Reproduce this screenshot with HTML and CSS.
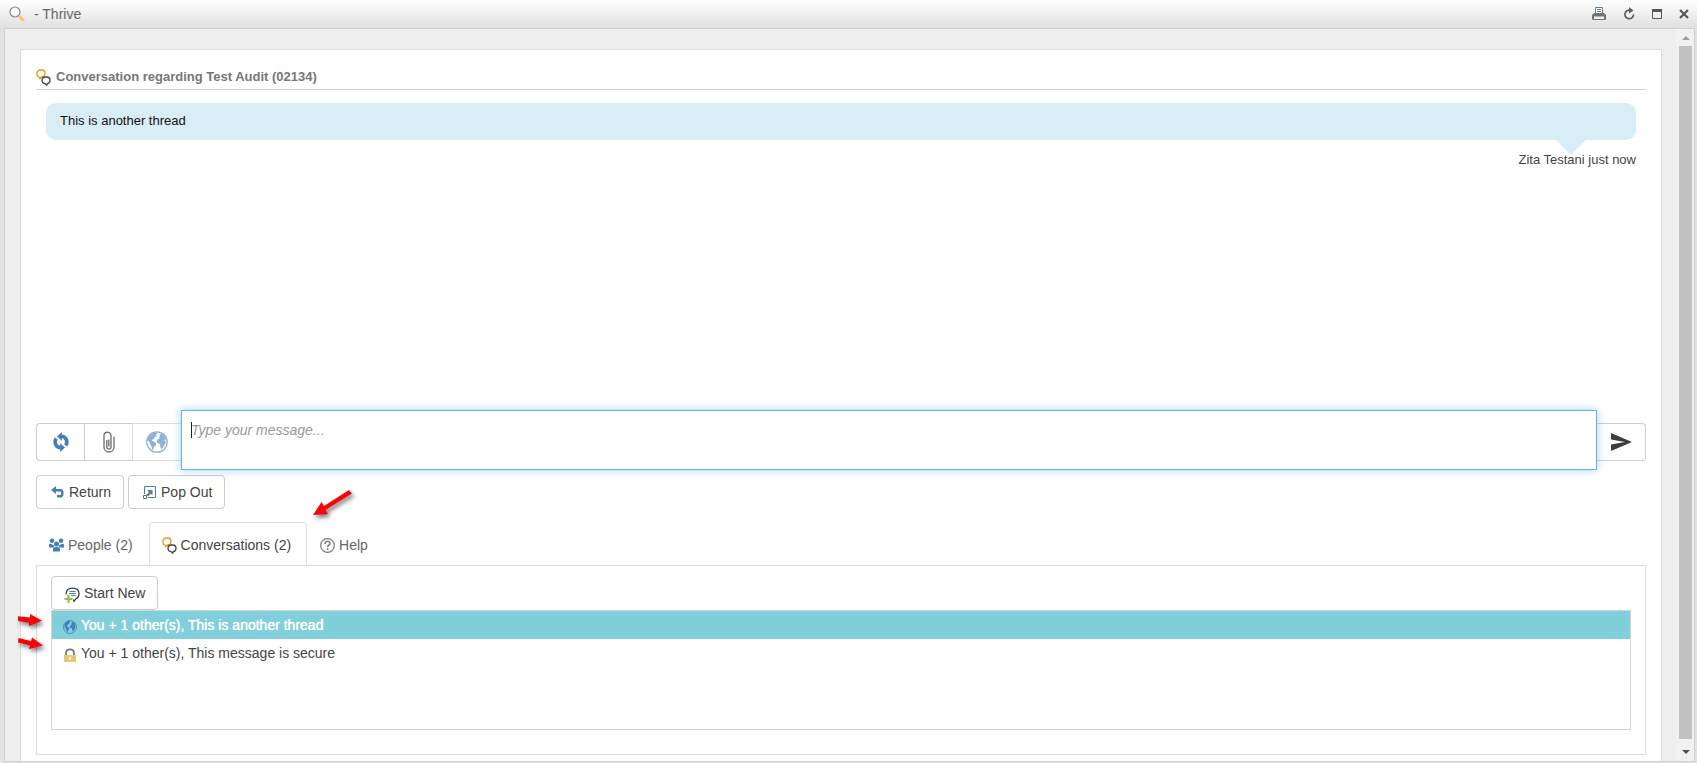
FILE: index.html
```html
<!DOCTYPE html>
<html lang="en">
<head>
<meta charset="utf-8">
<title>Thrive</title>
<link rel="stylesheet" href="styles.css">
</head>
<body>
<svg class="defs" aria-hidden="true">
  <symbol id="chats" viewBox="0 0 15 17">
    <path d="M4 8.300C2 8.300 1 6.800 1 5.200V4C1 2 2.500 1 4.500 1h1.200C7.700 1 9 2.200 9 4.200c0 2-1.300 3.600-3.300 3.800L4 9.500z" fill="none" stroke="#e39a17" stroke-width="1.300"/>
    <path d="M9.500 8h1.200c2 0 3.300 1.200 3.300 3.200 0 1.900-1.200 3.200-2.800 3.500l-.4 1.400-1.800-1.400C7 14.400 6 13.100 6 11.300 6 9.200 7.500 8 9.500 8z" fill="none" stroke="#444" stroke-width="1.300"/>
  </symbol>
  <symbol id="globe" viewBox="0 0 22 22">
    <circle cx="11" cy="11" r="10.200" fill="none" stroke="currentColor" stroke-width="1.300"/>
    <path d="M3 5.500C5 3 7.500 1.500 10.500 1.200l1 1.600-1.500 1 .5 1.200-2 1.200-.6 1.800-1.900.7.300 1.400 2 .6 2 1.700-.8 2.300-1.700 1.400-.5 2.700-1.200-.4-.8-3.400-1.500-2-.3-2.200L1.500 9z" fill="currentColor"/>
    <path d="M13.300 3.700 16 2.600l3 3.100 1.300 3-1.300-.3-.9.800 1.700 1-.5 2.600-1.900 2.500-1 2.200-1.500.3-.6-2.600-.2-2.300-2.600-.6-.9-2 1.200-2 1.800-.8-.5-1.300.8-.9z" fill="currentColor"/>
  </symbol>
</svg>

<header class="titlebar">
  <svg class="mag" viewBox="0 0 16 16"><circle cx="6" cy="6" r="5" fill="#f6f6f6" stroke="#8a8a8a" stroke-width="1.200"/><path d="M10 10 14.800 14.800" stroke="#f3c66b" stroke-width="3"/></svg>
  <h1>- Thrive</h1>
  <div class="window-tools">
    <button aria-label="Print"><svg width="14" height="14" viewBox="0 0 14 14"><path d="M3.500 6V.5h7V6" fill="#fff" stroke="#777"/><path d="M5 2.500h4M5 4.500h4" stroke="#4a80b8"/><path d="M2 6h10l2 2v4l-1 1H1l-1-1V8z" fill="#727272"/><path d="M2 9.500h10V12H2z" fill="#eee"/></svg></button>
    <button aria-label="Refresh"><svg width="12" height="14" viewBox="0 0 12 14"><path d="M7 3.200A4.300 4.300 0 1 0 10.500 7.500" fill="none" stroke="#5e5e5e" stroke-width="1.700"/><path d="M6 0v6.500L10.500 3.500z" fill="#5e5e5e"/></svg></button>
    <button aria-label="Maximize"><svg width="10" height="14" viewBox="0 0 10 14"><path d="M.5 3h9v8.500h-9z" fill="none" stroke="#555"/><path d="M0 2h10v3H0z" fill="#555"/></svg></button>
    <button aria-label="Close"><svg width="10" height="14" viewBox="0 0 10 14"><path d="m1 3 8 8M9 3l-8 8" stroke="#555" stroke-width="2.200"/></svg></button>
  </div>
</header>

<div class="frame">
  <main class="panel">
    <h2 class="heading"><svg class="chat-icon"><use href="#chats"/></svg>Conversation regarding Test Audit (02134)</h2>
    <section class="messages">
      <p class="bubble">This is another thread</p>
      <p class="author">Zita Testani just now</p>
    </section>

    <form class="composer">
      <button type="button" class="tool" aria-label="Refresh messages"><svg width="18" height="20" viewBox="0 0 18 20"><path d="M9 4.300c5 0 7.300 5 4.800 9.200M9 15.700c-5 0-7.300-5-4.800-9.200" fill="none" stroke="#447fba" stroke-width="3.600"/><path d="M9.800 0v8.800L5 4.400zM8.200 20v-8.800l4.800 4.400z" fill="#447fba"/></svg></button>
      <button type="button" class="tool" aria-label="Attach file"><svg width="12" height="22" viewBox="0 0 12 22"><path d="M3.800 9v7c0 2.800 4.200 2.800 4.200 0V4.500C8 .2 1 .2 1 4.500V16c0 6.700 10 6.700 10 0V5.500M5.800 15.500v-7" fill="none" stroke="#777" stroke-width="1.400"/></svg></button>
      <button type="button" class="tool public" aria-label="Public"><svg width="22" height="22"><use href="#globe"/></svg></button>
      <div class="entry"><textarea aria-label="Message" placeholder="Type your message..."></textarea><span class="caret"></span></div>
      <button type="submit" class="tool send" aria-label="Send"><svg width="21" height="18" viewBox="0 0 21 18"><path d="M0 0 21 9 0 18v-6.500L14 9 0 6.500z" fill="#3d3d3d"/></svg></button>
    </form>

    <div class="actions">
      <button class="btn"><svg width="13" height="12" viewBox="0 0 13 12"><path d="M5 0v8L0 4z" fill="#447fba"/><path d="M3 4.200h6.500c2.500 0 2.500 6 0 6H6" fill="none" stroke="#447fba" stroke-width="2.400"/></svg>Return</button>
      <button class="btn"><svg width="13" height="13" viewBox="0 0 13 13"><path d="M1.500 8V.5h11v11H5" fill="none" stroke="#447fba"/><path d="M4 4h5.500v5.500L7.800 7.800 5 10.600 3.200 8.800 6 6z" fill="#777"/><path d="M.5 9.500h3v3h-3z" fill="#fff" stroke="#666"/></svg>Pop Out</button>
    </div>

    <nav class="tabs">
      <a class="tab" href="#people"><svg width="15" height="14" viewBox="0 0 15 14"><g fill="#447fba"><circle cx="3" cy="2.800" r="2.300"/><circle cx="12" cy="2.800" r="2.300"/><circle cx="7.500" cy="6" r="2.500"/><path d="M0 9.500V6.500l1.500-1 3.500 2v2zM15 9.500V6.500l-1.500-1-3.500 2v2zM4 13.500v-3L6 9h3l2 1.500v3z"/></g></svg>People (2)</a>
      <a class="tab active" href="#conversations"><svg class="chat-icon"><use href="#chats"/></svg>Conversations (2)</a>
      <a class="tab" href="#help"><svg width="15" height="15" viewBox="0 0 15 15"><circle cx="7.500" cy="7.500" r="6.800" fill="none" stroke="#777" stroke-width="1.200"/><path d="M5 6c0-3.500 5-3.300 5-.6 0 1.700-2.400 1.700-2.400 3.500M7.600 10.200V12" fill="none" stroke="#777" stroke-width="1.500"/></svg>Help</a>
    </nav>
    <section class="tab-body" id="conversations">
      <button class="btn start"><svg width="16" height="16" viewBox="0 0 16 16"><path d="M2 7.500C2 3.500 4.500 1.200 8.500 1.200S15 3.200 15 6.700c0 2.800-1.400 4.300-3.300 5.300l-1.600 2.200-.8-1.600" fill="none" stroke="#3d3d3d" stroke-width="1.300"/><path d="M5.500 4.500h6M5 6.500h7M7 8.500h4.500" stroke="#447fba" stroke-width="1.200"/><path d="M4.500 8v8M.5 12h8" stroke="#99bf4b" stroke-width="2.200"/></svg>Start New</button>
      <ul class="threads">
        <li><button class="thread selected"><svg width="14" height="14"><use href="#globe"/></svg>You + 1 other(s), This is another thread</button></li>
        <li><button class="thread"><svg width="14" height="14" viewBox="0 0 14 14"><path d="M3 7V5.500C3 2.800 4.600 1.300 7 1.300s4 1.500 4 4.200V7" fill="none" stroke="#777" stroke-width="1.800"/><path d="M1 7h12v7H1z" fill="#edc374"/><path d="M6.200 8.700h1.600V12H6.200z" fill="#fff"/></svg>You + 1 other(s), This message is secure</button></li>
      </ul>
    </section>
  </main>
  <div class="scroll" aria-hidden="true">
    <svg width="8" height="4" viewBox="0 0 8 4"><path d="m0 4 4-4 4 4z" fill="#a0a0a0"/></svg>
    <span class="thumb"></span>
    <svg width="8" height="4" viewBox="0 0 8 4"><path d="m0 0 4 4 4-4z" fill="#505050"/></svg>
  </div>
</div>

<svg class="pointer to-tab" viewBox="0 0 44 34"><path d="M40 3.500 38 1 13 17 10.500 13 2 26l15-1-2.600-4L41 4.500z" fill="#fa0505"/></svg>
<svg class="pointer to-first" viewBox="0 0 30 18"><path d="M2 4.200 14 5.500V2l12 6.800L13 14v-3.300L2 9z" fill="#fa0505"/></svg>
<svg class="pointer to-second" viewBox="0 0 30 18"><path d="M2.500 2 15 5l1-3.500 11 8L13 13l1-3.500L2 6.500z" fill="#fa0505"/></svg>
</body>
</html>
```
FILE: styles.css
```css
* { box-sizing: border-box; }
body {
  margin: 0;
  height: 100vh;
  padding: 0 2px 1px 4px;
  display: flex;
  flex-direction: column;
  overflow: hidden;
  background: #e2e2e2;
  color: #444;
  font: 14px/20px "Liberation Sans", Arial, sans-serif;
}
h1, h2, p, ul { margin: 0; padding: 0; }
ul { list-style: none; }
svg { display: block; flex: none; }
.defs { position: absolute; width: 0; height: 0; }
button { font: inherit; color: inherit; cursor: pointer; }

.titlebar {
  flex: none;
  height: 28px;
  margin: 0 -2px 0 -4px;
  padding: 0 8px 0 9px;
  display: flex;
  align-items: center;
  background: linear-gradient(#fff, #e0e0e0);
}
.mag { width: 16px; height: 16px; }
.titlebar h1 { margin-left: 9px; font-size: 14px; font-weight: 400; color: #666; }
.window-tools { margin-left: auto; display: flex; align-items: center; gap: 17px; }
.window-tools button { padding: 0; border: 0; background: none; }

.frame {
  flex: 1;
  min-height: 0;
  display: flex;
  border: 1px solid #d0d0d0;
  background: #eee;
}
.panel {
  flex: 1;
  min-width: 0;
  margin: 20px 14px 0 15px;
  padding: 16px 15px 6px;
  border: 1px solid #dcdcdc;
  border-bottom: 0;
  background: #fff;
  display: flex;
  flex-direction: column;
}
.heading {
  height: 24px;
  display: flex;
  gap: 5px;
  border-bottom: 1px solid #d2d2d2;
  color: #777;
  font-size: 13px;
  line-height: 21px;
}
.chat-icon { width: 15px; height: 17px; }
.heading .chat-icon { margin-top: 3px; }
.messages { flex: 1; padding: 13px 10px 0; font-size: 13px; }
.bubble {
  position: relative;
  padding: 8px 14px 9px;
  border-radius: 10px;
  background: #d9edf7;
  color: #111;
}
.bubble::after {
  content: "";
  position: absolute;
  top: 100%;
  right: 50px;
  border: 15px solid transparent;
  border-top-color: #d9edf7;
  border-bottom: 0;
}
.author { position: relative; margin-top: 10px; text-align: right; }

.composer { display: flex; align-items: flex-end; }
.tool {
  width: 48px;
  height: 38px;
  margin: 0 0 9px;
  padding: 0;
  display: flex;
  align-items: center;
  justify-content: center;
  border: 1px solid #ccc;
  border-right: 0;
  background: #fff;
}
.tool:first-child { border-radius: 4px 0 0 4px; }
.public { width: 49px; color: #8fb1d4; border-color: #ddd; }
.send { width: 49px; border: 1px solid #ccc; border-left: 0; border-radius: 0 4px 4px 0; }
.entry { position: relative; flex: 1; display: flex; }
.entry textarea {
  flex: 1;
  height: 60px;
  padding: 9px;
  border: 1px solid #66afe9;
  outline: 0;
  resize: none;
  box-shadow: 0 0 8px rgba(102, 175, 233, .6);
  font: inherit;
  color: #444;
}
.entry textarea::placeholder { color: #999; font-style: italic; opacity: 1; }
.caret { position: absolute; left: 10px; top: 12px; width: 1px; height: 16px; background: #222; }

.actions { display: flex; gap: 4px; margin: 5px 0 13px; }
.btn {
  height: 34px;
  padding: 0 12px 0 14px;
  display: flex;
  align-items: center;
  gap: 5px;
  border: 1px solid #ccc;
  border-radius: 4px;
  background: #fff;
}
.tabs { display: flex; }
.tab {
  height: 43px;
  padding: 2px 15px 0 12px;
  display: flex;
  align-items: center;
  gap: 4px;
  border: 1px solid transparent;
  border-bottom: 0;
  color: #666;
  text-decoration: none;
}
.active {
  position: relative;
  margin-bottom: -1px;
  border-color: #ddd;
  border-radius: 4px 4px 0 0;
  background: #fff;
  color: #444;
}
.tab-body { padding: 10px 14px 24px; border: 1px solid #ddd; }
.start { padding: 0 12px; gap: 4px; }
.start svg { margin-top: 3px; }
.threads { height: 120px; border: 1px solid #d5d5d5; }
.thread {
  width: 100%;
  height: 28px;
  padding: 0 11px;
  display: flex;
  align-items: center;
  gap: 4px;
  border: 0;
  background: none;
  text-align: left;
}
.thread svg { margin-top: 4px; color: #447fba; }
.selected { background: #82cfdc; color: #fff; text-shadow: 0 0 1px #fff; }

.scroll {
  flex: none;
  width: 18px;
  padding: 7px 2px 7px 3px;
  display: flex;
  flex-direction: column;
  align-items: center;
  background: #f1f1f1;
}
.thumb { flex: 1; width: 13px; margin: 6px 0 11px; background: #c1c1c1; }

.pointer { position: absolute; filter: drop-shadow(2px 3px 2px rgba(0, 0, 0, .5)); }
.to-tab { left: 311px; top: 489px; width: 44px; height: 34px; }
.to-first { left: 16px; top: 612px; width: 30px; height: 18px; }
.to-second { left: 16px; top: 636px; width: 30px; height: 18px; }
```
